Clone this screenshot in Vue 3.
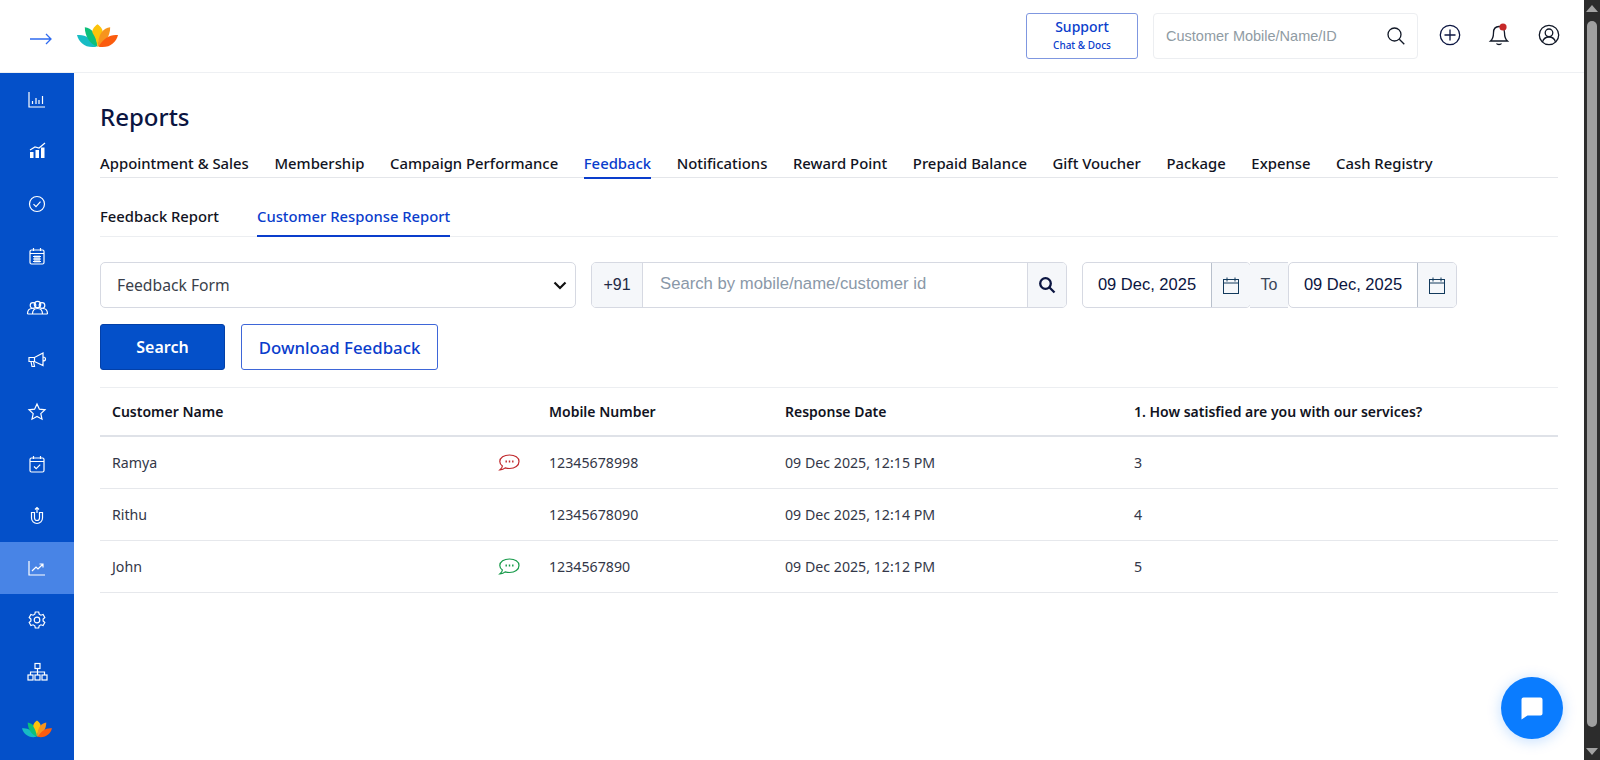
<script setup>
const tabs = ['Appointment & Sales','Membership','Campaign Performance','Feedback','Notifications','Reward Point','Prepaid Balance','Gift Voucher','Package','Expense','Cash Registry']
const rows = [
  { name:'Ramya', icon:'red', mobile:'12345678998', date:'09 Dec 2025, 12:15 PM', score:'3' },
  { name:'Rithu', icon:'', mobile:'12345678090', date:'09 Dec 2025, 12:14 PM', score:'4' },
  { name:'John', icon:'green', mobile:'1234567890', date:'09 Dec 2025, 12:12 PM', score:'5' },
]
</script>

<template>
  <div class="window">
    <div class="app">
      <header class="topbar">
        <svg class="arrow" width="22" height="12" viewBox="0 0 22 12" fill="none" stroke="#2f6bf0" stroke-width="1.3"><path d="M0 6h21M16 1l5 5-5 5"/></svg>
        <svg class="logo" width="41" height="24" viewBox="0 0 42 24">
          <path d="M0 11C8 10 15 14 20 23 9 25 2 19 0 11Z" fill="#17bcc4"/>
          <path d="M8 3C15 4 20 9 21 23 13 20 8 12 8 3Z" fill="#0cbf7a"/>
          <path d="M21 0C17 3 15 6 16 9 18 12 20 16 21 23 22 16 24 12 26 9 27 6 25 3 21 0Z" fill="#fcc30b"/>
          <path d="M34 3C27 4 22 9 21 23 29 20 34 12 34 3Z" fill="#f7941d"/>
          <path d="M42 11C34 10 27 14 22 23 33 25 40 19 42 11Z" fill="#fb5c0e"/>
        </svg>
        <div class="spacer"></div>
        <div class="support"><strong>Support</strong><small>Chat &amp; Docs</small></div>
        <div class="global-search">
          <span>Customer Mobile/Name/ID</span>
          <svg width="20" height="20" viewBox="0 0 20 20" fill="none" stroke="#111827" stroke-width="1.3"><circle cx="8.5" cy="8.5" r="6.5"/><path d="M13.3 13.3l5 5"/></svg>
        </div>
        <svg class="top-icon first" width="22" height="22" viewBox="0 0 22 22" fill="none" stroke="#0b1541" stroke-width="1.3"><circle cx="11" cy="11" r="9.7"/><path d="M11 5.5v11M5.5 11h11"/></svg>
        <svg class="top-icon bell" width="22" height="24" viewBox="0 0 22 24" fill="none" stroke="#111827" stroke-width="1.3"><path d="M11 3.5c-3.8 0-5.5 3-5.5 6.2 0 4.5-1 6.600-3 8.300h17c-2-1.700-3-3.800-3-8.300C16.500 6.500 14.800 3.500 11 3.500Z"/><path d="M8.500 20.500c.8 1.300 4.200 1.300 5 0"/><circle cx="15" cy="4" r="3.600" fill="#c62828" stroke="none"/></svg>
        <svg class="top-icon" width="22" height="22" viewBox="0 0 22 22" fill="none" stroke="#111827" stroke-width="1.3"><circle cx="11" cy="11" r="9.700"/><circle cx="11" cy="8.800" r="3.800"/><path d="M4.500 18c1-3.500 3.500-5 6.500-5s5.500 1.500 6.500 5"/></svg>
      </header>

      <div class="body">
        <nav class="rail">
          <div class="item"><svg viewBox="0 0 20 20"><path d="M2 2v15h16M5.500 14v-3M9 14V8M12 14v-4M15.500 14V6"/></svg></div>
          <div class="item"><svg viewBox="0 0 20 20"><path d="M3 8l5-3 4 1 6-5"/><path class="fill" d="M3 10h3.500v6H3zM8.500 8H12v8H8.500zM14 5.500h3.500V16H14z"/></svg></div>
          <div class="item"><svg viewBox="0 0 20 20"><circle cx="10" cy="10" r="7.500"/><path d="M6.500 10.200l2.500 2.500 4.500-5"/></svg></div>
          <div class="item"><svg viewBox="0 0 20 20"><rect x="3" y="4" width="14" height="14" rx="1.500"/><path d="M3 7.500h14M6.500 2v3M13.500 2v3M6 10.500h8M6 13h8M6 15.500h8M8 9.500v7M10 9.500v7M12 9.500v7"/></svg></div>
          <div class="item wide"><svg viewBox="0 0 22 20"><circle cx="6.500" cy="7.500" r="2.800"/><circle cx="15.500" cy="7.500" r="2.800"/><circle cx="11" cy="6.500" r="3.200"/><path d="M1 16c0-3.500 2-5.500 4.500-5.500M21 16c0-3.500-2-5.500-4.500-5.500M6 16c0-3.500 2-5.500 5-5.500s5 2 5 5.500M1 16h20"/></svg></div>
          <div class="item"><svg viewBox="0 0 20 20"><path d="M2 7.500h5.500L16 3v12.500L7.500 11.500H2zM7.500 7.500v4M4 11.500l1 5h2.500l-1-5M16 7c1.500 0 2.500 1 2.500 2s-1 2-2.500 2"/></svg></div>
          <div class="item"><svg viewBox="0 0 20 20"><path d="M10 2l2.400 5.200 5.600.6-4.200 3.800 1.200 5.600L10 14.400 5 17.200l1.200-5.600L2 7.800l5.600-.6z"/></svg></div>
          <div class="item"><svg viewBox="0 0 20 20"><rect x="3" y="4" width="14" height="14" rx="1.500"/><path d="M3 7.500h14M6.500 2v3M13.500 2v3M7 12.500l2.200 2.200 4-4"/></svg></div>
          <div class="item"><svg viewBox="0 0 20 20"><path d="M4.500 6.500V12a5.500 5.500 0 0 0 11 0V6.500h-3V12a2.500 2.500 0 0 1-5 0V6.500zM10 7V1.500M8 3.500l2-2 2 2"/></svg></div>
          <div class="item active"><svg viewBox="0 0 20 20"><path d="M2 3v14h16M5 13l4-4 2 2 5-5M12.500 6H16v3.500"/></svg></div>
          <div class="item"><svg viewBox="0 0 20 20"><path d="M8.300 2h3.400l.5 2.200 1.700 1 2.200-.7 1.700 3-1.700 1.500v2l1.700 1.500-1.700 3-2.200-.7-1.700 1-.5 2.200H8.300l-.5-2.200-1.700-1-2.200.7-1.700-3 1.700-1.500v-2L2.200 7.500l1.700-3 2.200.7 1.700-1z"/><circle cx="10" cy="10" r="2.800"/></svg></div>
          <div class="item wide"><svg viewBox="0 0 22 20"><rect x="8.500" y="1.500" width="5" height="5"/><rect x="1.500" y="13" width="5" height="5"/><rect x="8.500" y="13" width="5" height="5"/><rect x="15.500" y="13" width="5" height="5"/><path d="M11 6.500V13M4 13v-3h14v3"/></svg></div>
          <div class="rail-logo">
            <svg width="30" height="18" viewBox="0 0 42 24" class="lotus">
              <path d="M0 11C8 10 15 14 20 23 9 25 2 19 0 11Z" fill="#17bcc4"/>
              <path d="M8 3C15 4 20 9 21 23 13 20 8 12 8 3Z" fill="#0cbf7a"/>
              <path d="M21 0C17 3 15 6 16 9 18 12 20 16 21 23 22 16 24 12 26 9 27 6 25 3 21 0Z" fill="#fcc30b"/>
              <path d="M34 3C27 4 22 9 21 23 29 20 34 12 34 3Z" fill="#f7941d"/>
              <path d="M42 11C34 10 27 14 22 23 33 25 40 19 42 11Z" fill="#fb5c0e"/>
            </svg>
          </div>
        </nav>

        <main class="content">
          <h1>Reports</h1>
          <div class="tabs">
            <span v-for="t in tabs" :key="t" class="tab" :class="{ on: t === 'Feedback' }">{{ t }}</span>
          </div>
          <div class="subtabs">
            <span class="sub">Feedback Report</span>
            <span class="sub on">Customer Response Report</span>
          </div>

          <div class="filters">
            <div class="select">
              <span>Feedback Form</span>
              <svg width="14" height="9" viewBox="0 0 14 9" fill="none" stroke="#111" stroke-width="2.200"><path d="M1.500 1.500L7 7l5.500-5.500"/></svg>
            </div>
            <div class="group search-group">
              <span class="addon left">+91</span>
              <span class="ph">Search by mobile/name/customer id</span>
              <span class="addon right">
                <svg width="18" height="18" viewBox="0 0 18 18" fill="none" stroke="#0b1541" stroke-width="2.300"><circle cx="7.500" cy="7.500" r="5.300"/><path d="M11.500 11.500l5 5"/></svg>
              </span>
            </div>
            <div class="dates">
              <div class="group date">
                <span class="val">09 Dec, 2025</span>
                <span class="addon cal"><svg width="16" height="17" viewBox="0 0 16 17" fill="none" stroke="#123a5c" stroke-width="1"><rect x=".5" y="2.500" width="15" height="14"/><path d="M.5 6h15M4 .5v4M12 .5v4"/></svg></span>
              </div>
              <span class="to">To</span>
              <div class="group date">
                <span class="val">09 Dec, 2025</span>
                <span class="addon cal"><svg width="16" height="17" viewBox="0 0 16 17" fill="none" stroke="#123a5c" stroke-width="1"><rect x=".5" y="2.500" width="15" height="14"/><path d="M.5 6h15M4 .5v4M12 .5v4"/></svg></span>
              </div>
            </div>
          </div>

          <div class="actions">
            <button class="btn primary">Search</button>
            <button class="btn outline">Download Feedback</button>
          </div>

          <div class="table">
            <div class="tr head">
              <span>Customer Name</span><span></span><span>Mobile Number</span><span>Response Date</span><span>1. How satisfied are you with our services?</span>
            </div>
            <div v-for="r in rows" :key="r.name" class="tr">
              <span>{{ r.name }}</span>
              <span class="msg">
                <svg v-if="r.icon" width="22" height="18" viewBox="0 0 22 18" fill="none" :stroke="r.icon === 'red' ? '#c0282c' : '#179a4a'" stroke-width="1.200">
                  <path d="M11.500 1C6 1 1.800 3.700 1.800 7.500c0 1.900 1 3.400 2.600 4.500-.2 1.500-1 2.800-2.400 3.800 2.200 0 4-.8 5.200-1.900 1.300.4 2.700.6 4.300.6 5.500 0 9.500-2.900 9.500-7S17 1 11.500 1Z"/>
                  <path d="M7.500 7.500h1.400M10.800 7.500h1.400M14.100 7.500h1.400" stroke-width="2"/>
                </svg>
              </span>
              <span>{{ r.mobile }}</span>
              <span>{{ r.date }}</span>
              <span>{{ r.score }}</span>
            </div>
          </div>
        </main>
      </div>
    </div>

    <div class="scrollbar">
      <i class="up"></i>
      <b></b>
      <i class="down"></i>
    </div>

    <div class="chat">
      <svg width="24" height="24" viewBox="0 0 24 24"><path fill="#fff" d="M3.500 1.500h17a2 2 0 0 1 2 2v14a2 2 0 0 1-2 2H7.500L1.500 23.500v-20a2 2 0 0 1 2-2Z"/></svg>
    </div>
  </div>
</template>

<style>
html, body { margin: 0; background: #fff; overflow: hidden; }
</style>

<style scoped>
.window { position: relative; display: flex; width: 1600px; height: 760px; overflow: hidden; font-family: "Noto Sans", "Open Sans", sans-serif; background: #fff; color: #1a1a2e; }
.app { flex: 1; min-width: 0; display: flex; flex-direction: column; }

.topbar { height: 72px; flex: none; display: flex; align-items: center; border-bottom: 1px solid #eef0f3; box-sizing: content-box; }
.arrow { margin-left: 30px; margin-top: 5px; }
.logo { margin-left: 25px; margin-top: 0; }
.spacer { flex: 1; }
.support { width: 110px; height: 42px; margin-top: -1px; border: 1px solid #7f97e0; border-radius: 3px; display: flex; flex-direction: column; align-items: center; justify-content: center; color: #0a3dcc; padding-bottom: 2px; box-sizing: content-box; }
.support strong { font-size: 14px; font-weight: 500; line-height: 19px; margin-bottom: 2px; }
.support small { font-size: 10px; line-height: 15px; font-weight: 500; }
.global-search { height: 44px; margin-left: 15px; margin-top: -1px; padding: 0 11px 0 12px; box-sizing: content-box; width: 240px; border: 1px solid #eceef1; border-radius: 4px; display: flex; align-items: center; justify-content: space-between; font-family: "Liberation Sans", sans-serif; font-size: 14.500px; color: #8f9ba3; }
.top-icon { margin-left: 28px; margin-top: -2px; }
.top-icon.first { margin-left: 21px; }
.top-icon.bell { margin-left: 27px; }
.topbar > .top-icon:last-child { margin-right: 24px; }

.body { flex: 1; min-height: 0; display: flex; }
.rail { width: 74px; flex: none; background: #0450c9; display: flex; flex-direction: column; padding-top: 1px; }
.item { height: 52px; display: flex; align-items: center; justify-content: center; }
.item svg { width: 20px; height: 20px; fill: none; stroke: #fff; stroke-width: 1.200; }
.item.wide svg { width: 23px; }
.item svg .fill { fill: #fff; stroke: none; }
.item.active { background: #4884e6; }
.rail-logo { flex: 1; display: flex; align-items: center; justify-content: center; }

.content { flex: 1; min-width: 0; padding: 0 26px; }
h1 { margin: 27px 0 0; height: 34px; font-size: 24px; line-height: 34px; font-weight: 500; color: #0b1541; }
.tabs { display: flex; gap: 25.600px; height: 34px; margin-top: 10px; border-bottom: 1px solid #e4e6ea; box-sizing: border-box; }
.tab { height: 34px; line-height: 39px; font-size: 14.850px; font-weight: 500; color: #111322; box-sizing: border-box; white-space: nowrap; }
.tab.on { color: #0a3dcc; border-bottom: 2px solid #0a3dcc; height: 35px; }
.subtabs { display: flex; gap: 38px; height: 59px; border-bottom: 1px solid #eceef1; box-sizing: border-box; }
.sub { height: 59px; line-height: 76px; font-size: 14.800px; font-weight: 500; color: #111322; box-sizing: border-box; white-space: nowrap; }
.sub.on { color: #0a3dcc; border-bottom: 2px solid #0a3dcc; }

.filters { display: flex; margin-top: 25px; height: 46px; }
.select { width: 476px; box-sizing: border-box; border: 1px solid #d6d9e2; border-radius: 5px; display: flex; align-items: center; justify-content: space-between; padding: 0 8px 0 16px; font-size: 15.700px; color: #3a3f4b; }
.group { display: flex; align-items: stretch; box-sizing: border-box; border: 1px solid #d6d9e2; border-radius: 5px; overflow: hidden; font-family: "Liberation Sans", sans-serif; }
.search-group { width: 476px; margin-left: 15px; }
.addon { background: #f5f7fa; display: flex; align-items: center; justify-content: center; }
.addon.left { width: 50px; border-right: 1px solid #d6d9e2; font-size: 16px; color: #1f2a44; }
.addon.right { width: 38px; border-left: 1px solid #d6d9e2; }
.ph { flex: 1; padding-left: 17px; line-height: 42px; font-size: 16.700px; color: #8a98a8; }
.dates { display: flex; margin-left: 15px; }
.date { width: 169px; }
.val { flex: 1; text-align: center; line-height: 42px; font-size: 16.500px; color: #0b1541; }
.cal { width: 38px; flex: none; border-left: 1px solid #b8c0cc; }
.to { width: 38px; background: #f5f7fa; border-top: 1px solid #d6d9e2; border-bottom: 1px solid #d6d9e2; box-sizing: border-box; display: flex; align-items: center; justify-content: center; font-family: "Liberation Sans", sans-serif; font-size: 16px; color: #3a4658; margin-left: -1px; }

.actions { display: flex; gap: 16px; margin-top: 16px; height: 46px; }
.btn { font-family: inherit; height: 46px; border-radius: 3px; font-size: 16px; font-weight: 500; padding: 0; cursor: pointer; }
.primary { width: 125px; background: #0450c9; border: 1px solid #0340a8; color: #fff; font-weight: 600; }
.outline { width: 197px; background: #fff; border: 1px solid #3e66d8; color: #0a3dcc; font-size: 16.800px; }

.table { margin-top: 17px; }
.tr { display: grid; grid-template-columns: 386px 51px 236px 349px 1fr; height: 52px; align-items: center; padding-left: 12px; border-bottom: 1px solid #e6e8ec; font-size: 14.200px; color: #333748; box-sizing: border-box; }
.tr.head { height: 50px; border-top: 1px solid #eceef1; border-bottom: 2px solid #dfe2e8; font-weight: 600; color: #111322; font-size: 14px; }
.msg { display: flex; align-items: center; }

.scrollbar { width: 16px; flex: none; background: #2c2c2c; display: flex; flex-direction: column; align-items: center; }
.scrollbar b { width: 10px; flex: 1; background: #9f9f9f; border-radius: 5px; margin: 4px 0 16px; }
.scrollbar i { width: 0; height: 0; border-left: 6px solid transparent; border-right: 6px solid transparent; margin: 5px 0; }
.scrollbar .up { border-bottom: 7px solid #a3a3a3; }
.scrollbar .down { border-top: 7px solid #a3a3a3; }

.chat { position: absolute; left: 1501px; top: 677px; width: 62px; height: 62px; border-radius: 50%; background: #0a7cff; box-shadow: 0 2px 14px rgba(10,124,255,.25); display: flex; align-items: center; justify-content: center; }
</style>
